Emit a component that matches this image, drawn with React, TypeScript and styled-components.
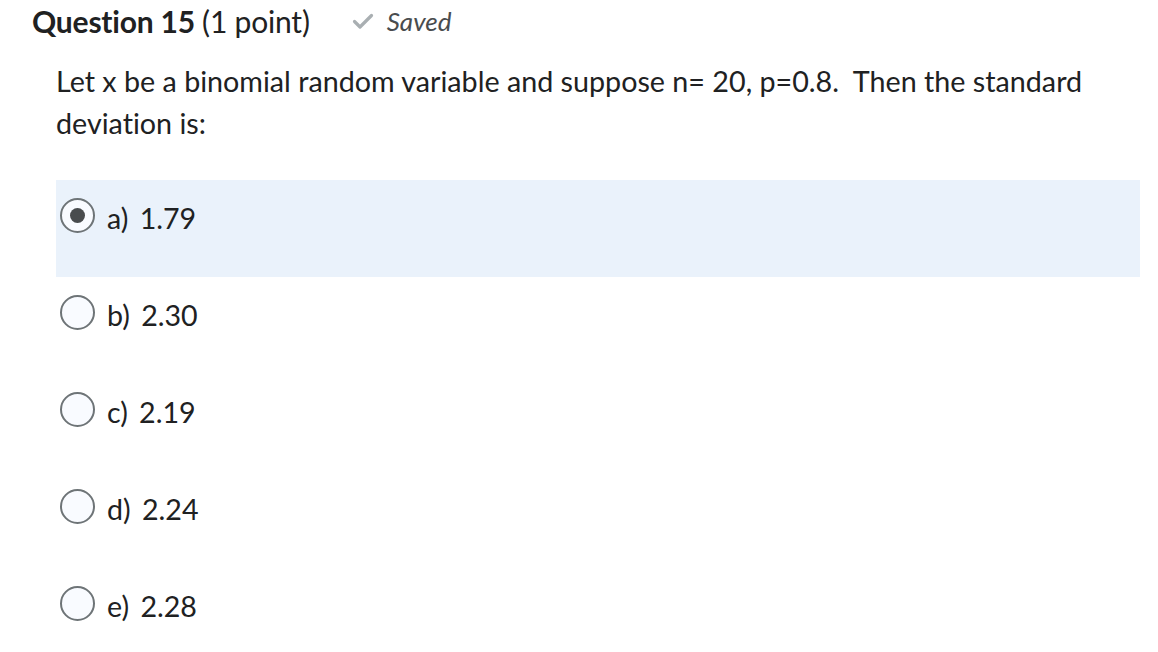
import React from "react";
import styled, { createGlobalStyle } from "styled-components";

const Global = createGlobalStyle`
  html, body { margin: 0; padding: 0; background: #ffffff; }
  body {
    font-family: Lato, "Open Sans", sans-serif;
    color: #202122;
    font-variant-ligatures: none;
  }
`;

const Page = styled.div`
  padding: 0 18px 0 32px;
  width: 1158px;
  box-sizing: border-box;
`;

const Header = styled.div`
  display: flex;
  align-items: center;
  height: 42px;
`;

const Title = styled.h2`
  margin: 0;
  font-size: 30px;
  font-weight: 700;
  color: #202122;
  letter-spacing: -0.2px;
  line-height: 42px;
`;

const Points = styled.span`
  font-weight: 400;
`;

const Saved = styled.span`
  display: inline-flex;
  align-items: center;
  margin-left: 42px;
  gap: 13px;
  font-style: italic;
  font-size: 26px;
  color: #494c4e;
`;

const Body = styled.div`
  padding-left: 24px;
`;

const Prompt = styled.p`
  margin: 18px 0 36px;
  font-size: 28.7px;
  line-height: 42px;
  color: #202122;
`;

const Options = styled.div`
  display: flex;
  flex-direction: column;
`;

const Option = styled.label<{ $selected?: boolean }>`
  display: flex;
  align-items: flex-start;
  box-sizing: border-box;
  height: 97px;
  padding: 18px 0 0 4px;
  background: ${(p) => (p.$selected ? "#eaf2fb" : "transparent")};
  cursor: pointer;
`;

const Radio = styled.span<{ $checked?: boolean }>`
  box-sizing: border-box;
  flex: none;
  width: 35px;
  height: 35px;
  border-radius: 50%;
  border: 2px solid #6e7477;
  background: #f9fbff;
  display: flex;
  align-items: center;
  justify-content: center;
  margin-right: 11px;
  &::after {
    content: "";
    display: ${(p) => (p.$checked ? "block" : "none")};
    width: 15px;
    height: 15px;
    border-radius: 50%;
    background: #494c4e;
  }
`;

const OptionText = styled.span`
  font-size: 28.6px;
  line-height: 35px;
  margin-top: 3px;
  margin-left: 1px;
  word-spacing: 4px;
  color: #202122;
`;

const options = ["a) 1.79", "b) 2.30", "c) 2.19", "d) 2.24", "e) 2.28"];

export default function App() {
  return (
    <>
      <Global />
      <Page>
        <Header>
          <Title>
            Question 15 <Points>(1 point)</Points>
          </Title>
          <Saved>
            <svg width="22" height="18" viewBox="0 0 22 18">
              <path d="M2.5 9.5 L8 15 L19.5 3.5" fill="none" stroke="#a9afb2" strokeWidth="3.2" strokeLinecap="round" strokeLinejoin="round" />
            </svg>
            Saved
          </Saved>
        </Header>
        <Body>
          <Prompt>
            Let x be a binomial random variable and suppose n= 20, p=0.8.&nbsp; Then the standard deviation is:
          </Prompt>
          <Options>
            {options.map((o, i) => (
              <Option key={o} $selected={i === 0}>
                <Radio $checked={i === 0} />
                <OptionText>{o}</OptionText>
              </Option>
            ))}
          </Options>
        </Body>
      </Page>
    </>
  );
}
